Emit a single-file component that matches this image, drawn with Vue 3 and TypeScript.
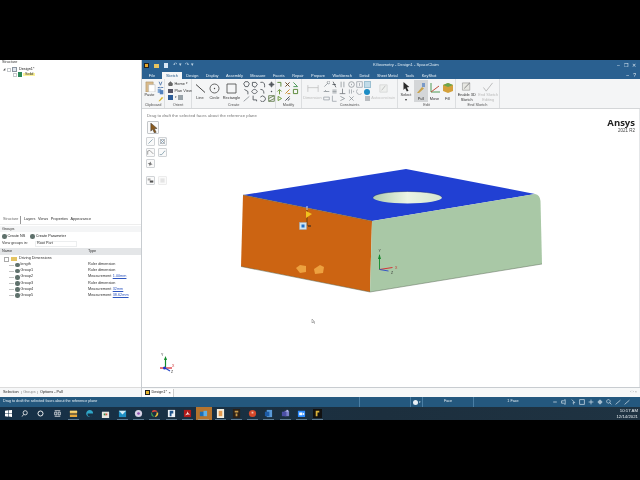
<script setup lang="ts">
interface Shape { d: string; c: string }
interface Row { name: string; type: string; link?: string }
interface Mini { d: string; c: string }

const fileTabs = ['Sketch', 'Design', 'Display', 'Assembly', 'Measure', 'Facets', 'Repair', 'Prepare', 'Workbench', 'Detail', 'Sheet Metal', 'Tools', 'KeyShot']

const rows: Row[] = [
  { name: 'length', type: 'Ruler dimension' },
  { name: 'Group1', type: 'Ruler dimension' },
  { name: 'Group2', type: 'Measurement', link: '1.00mm' },
  { name: 'Group3', type: 'Ruler dimension' },
  { name: 'Group4', type: 'Measurement', link: '32mm' },
  { name: 'Group5', type: 'Measurement', link: '38.62mm' }
]

const dark = '#4a4f55'
const createMinis: Mini[] = [
  { d: 'M3 1h4l2 3-2 4H3L1 4z', c: dark },
  { d: 'M2 2h5l2 3-3 4-4-2z', c: dark },
  { d: 'M2 2c4-1 6 1 6 4v3', c: dark },
  { d: 'M5 1v8M1 5h8M3 3h4v4H3z', c: dark },
  { d: 'M2 2l5 3v4', c: dark },
  { d: 'M1 5c2-4 6-4 8 0-2 4-6 4-8 0z', c: dark },
  { d: 'M2 2c4 0 5 2 5 6', c: dark },
  { d: 'M5 4v2M4 5h2', c: dark },
  { d: 'M1 9l8-7', c: '#8a9096' },
  { d: 'M3 1v6h5v2', c: dark },
  { d: 'M2 3a4 4 0 1 1 0 5', c: dark },
  { d: 'M1 1h8v8H1zM1 5l8-4M1 9l8-4', c: '#5e7a4a' }
]
const modifyMinis: Mini[] = [
  { d: 'M2 2h5v6', c: '#5c8a3a' },
  { d: 'M2 2l6 6M8 2L2 8', c: '#6b4a2a' },
  { d: 'M2 2l6 6M2 8h6', c: '#4e9a5a' },
  { d: 'M5 9V3M2 5l3-3 3 3', c: '#6c9a3c' },
  { d: 'M2 8l6-6M5 8h4', c: '#c98a2c' },
  { d: 'M2 2h6v6H2z', c: '#5c8a3a' },
  { d: 'M3 2v6l5-3z', c: '#6c9a3c' },
  { d: 'M2 8l6-6M6 8l2-3', c: '#4a4f55' }
]
const constraintMinis: Mini[] = [
  { d: 'M2 8l5-5M6 2a2 2 0 1 1 0 .1', c: '#8a9096' },
  { d: 'M3 1l4 8M2 5h5', c: dark },
  { d: 'M3 1v8M7 1v8', c: '#8a9096' },
  { d: 'M5 1a4 4 0 1 1 0 8 4 4 0 1 1 0-8M5 4v2', c: '#8a9096' },
  { d: 'M1 1h8v8H1zM5 3v4', c: '#9aa0a6' },
  { d: 'M1 5h8M3 3l2 2', c: '#8a9096' },
  { d: 'M2 3h6M2 5h6M2 7h6', c: '#8a9096' },
  { d: 'M5 1v7M1 8h8', c: '#6e7479' },
  { d: 'M2 2v6M5 2v6M8 4v2', c: '#9aa0a6' },
  { d: 'M2 2a4 4 0 0 0 6 6', c: '#9aa0a6' },
  { d: 'M1 3h8v4H1z', c: '#9aa0a6' },
  { d: 'M2 1v8h6', c: '#9aa0a6' },
  { d: 'M2 2l6 3-6 3', c: '#8a9096' },
  { d: 'M2 2l6 6M8 2L2 8', c: '#8a9096' }
]

const statusIcons = ['M2 5h6', 'M1 3h3l3-2v8L4 7H1z', 'M3 1l5 5H5l1 3', 'M1 1h8v8H1z', 'M5 1v8M1 5h8', 'M5 1v8M1 5h8M3 3h4v4H3z', 'M4 1a3 3 0 1 0 .1 0M6 6l3 3', 'M1 9l8-7', 'M1 9l8-7']

const taskIcons: Shape[][] = [
  [{ d: 'M1 2h8v3H1zM1 6h8v3H1z', c: '#e8a83a' }, { d: 'M1 2h8v2H1z', c: '#f6d77a' }],
  [{ d: 'M5 1a4 4 0 0 1 4 4H3a3 3 0 0 0 5 3 4 4 0 1 1-3-7z', c: '#2fa6c8' }],
  [{ d: 'M1 3h8v7H1z', c: '#e6e6e0' }, { d: 'M3 5h2v2H3z', c: '#2f8f4a' }, { d: 'M5 5h2v2H5z', c: '#d8553a' }],
  [{ d: 'M1 2h8v7H1z', c: '#1f8fc2' }, { d: 'M1 2l4 4 4-4z', c: '#d2ecf6' }],
  [{ d: 'M5 1a4 4 0 1 1 0 8 4 4 0 1 1 0-8z', c: '#d7d2e6' }, { d: 'M5 3.5a1.5 1.5 0 1 1 0 3 1.5 1.5 0 1 1 0-3z', c: '#8e4fb0' }],
  [{ d: 'M5 1a4 4 0 0 1 3.5 2H5a2 2 0 0 0-2 1L2 2.5A4 4 0 0 1 5 1z', c: '#d8453a' }, { d: 'M1.6 3.4L3 6l1.6 3A4 4 0 0 1 1.6 3.4z', c: '#3a9a52' }, { d: 'M9 4a4 4 0 0 1-4 5l2-3a2 2 0 0 0 0-2z', c: '#eec23a' }],
  [{ d: 'M1 1h8v8H1z', c: '#eef2f6' }, { d: 'M3 2h4v3H5v3H3z', c: '#20548c' }],
  [{ d: 'M1 1h8v8H1z', c: '#b01a1a' }, { d: 'M2 7c2-1 3-3 3-5 0 2 1 3 3 4-2 0-4 0-6 1z', c: '#f3e3e3' }],
  [{ d: 'M1 3h5v5H1z', c: '#1d6fb8' }, { d: 'M5 2h4v6H5z', c: '#5fb0e6' }],
  [{ d: 'M1 0h8v10H1z', c: '#f5efe0' }, { d: 'M3 2h4v6H3z', c: '#e59a4e' }],
  [{ d: 'M1 0h8v10H1z', c: '#2b2118' }, { d: 'M3 2h4v2H3zM4 5h2v3H4z', c: '#c79a4a' }],
  [{ d: 'M5 1a4 4 0 1 1 0 8 4 4 0 1 1 0-8z', c: '#d4482a' }, { d: 'M4 3h2v2H4z', c: '#f3c2b0' }],
  [{ d: 'M3 1h6v8H3z', c: '#5a9ad8' }, { d: 'M1 3h5v5H1z', c: '#1d5ba6' }],
  [{ d: 'M4 2h5v6H4z', c: '#7a80c8' }, { d: 'M1 3h5v5H1z', c: '#4b4fa6' }, { d: 'M6 1h2v2H6z', c: '#b4b8e8' }],
  [{ d: 'M1 2h8v6a1 1 0 0 1-1 1H2a1 1 0 0 1-1-1z', c: '#2d8cff' }, { d: 'M2.500 4h3.500v3H2.500zM6.500 5l1.500-1v3l-1.500-1z', c: '#ffffff' }],
  [{ d: 'M0 0h10v10H0z', c: '#111111' }, { d: 'M3 2h4v2H5v4H3z', c: '#d8b23a' }]
]
</script>

<template>
  <div class="screen">
    <div class="main">
      <aside class="left">
        <div class="caption">Structure</div>
        <div class="tree">
          <div class="tree-row">
            <span class="twist">◢</span><span class="check" /><span class="doc" />Design1*
          </div>
          <div class="tree-row sub">
            <span class="check" /><span class="solid-icon" /><span class="solid">Solid</span>
          </div>
        </div>
        <div class="tabs-row">
          <span class="active">Structure</span><span>Layers</span><span>Views</span><span>Properties</span><span>Appearance</span>
        </div>
        <div class="groups-head">Groups</div>
        <div class="create-row">
          <span class="create-item"><i class="gear" />Create NS</span>
          <span class="create-item"><i class="gear" />Create Parameter</span>
        </div>
        <div class="view-row">
          View groups in:
          <span class="combo">Root Part</span>
        </div>
        <div class="table-head"><span class="col-name">Name</span><span>Type</span></div>
        <div class="table-row folder-row">
          <span class="col-name"><i class="box" /><i class="folder" />Driving Dimensions</span>
        </div>
        <div v-for="r in rows" :key="r.name" class="table-row">
          <span class="col-name indent"><i class="line" /><i class="gear" />{{ r.name }}</span>
          <span>{{ r.type }}<a v-if="r.link" class="link">{{ r.link }}</a></span>
        </div>
        <div class="left-bottom">
          <span>Selection</span><span class="dim">Groups</span><span>Options - Pull</span>
        </div>
      </aside>

      <section class="right">
        <header class="title-bar">
          <div class="qat">
            <i class="q-logo" /><i class="q-open" /><i class="q-save" /><span class="q-undo">↶ ▾ ↷ ▾</span>
          </div>
          <span class="title-text">KGeometry - Design1 - SpaceClaim</span>
          <span class="win-btns">–&nbsp;&nbsp;&nbsp;❐&nbsp;&nbsp;&nbsp;✕</span>
        </header>
        <nav class="tab-bar">
          <span class="file">File</span>
          <span v-for="t in fileTabs" :key="t" class="tab" :class="{ on: t === 'Sketch' }">{{ t }}</span>
          <span class="tab-right">–&nbsp;&nbsp;&nbsp;?</span>
        </nav>

        <div class="ribbon">
          <div class="group g-clip">
            <div class="g-body">
              <div class="big paste"><svg width="12" height="11" viewBox="0 0 13 12"><path d="M2 1h8v11H2z" fill="#d8b98a" stroke="#a08a60" stroke-width=".5" /><path d="M5 4h7v8H5z" fill="#fff" stroke="#a9a9a9" stroke-width=".5" /></svg><span>Paste</span></div>
              <div class="minis-col">
                <svg width="7" height="7" viewBox="0 0 10 10"><path d="M3 1l2 5 2-5M3 9a1.500 1.500 0 1 0 .1 0M7 9a1.500 1.500 0 1 0 .1 0" fill="none" stroke="#5a7fb0" stroke-width="1.400" /></svg>
                <svg width="7" height="7" viewBox="0 0 10 10"><path d="M1 1h5v6H1z" fill="#7ea6d6" /><path d="M4 3h5v6H4z" fill="#4f7fbe" /></svg>
                <svg width="7" height="7" viewBox="0 0 10 10"><path d="M2 9l5-6 2 1-5 5z" fill="#d7b52e" /></svg>
              </div>
            </div>
            <div class="g-label">Clipboard</div>
          </div>

          <div class="group g-orient">
            <div class="orient">
              <div class="o-row"><i class="o-home" />Home<em>▾</em></div>
              <div class="o-row"><i class="o-plan" />Plan View</div>
              <div class="o-row"><i class="o-cube" /><em>▾</em><i class="o-cube gray" /></div>
            </div>
            <div class="g-label">Orient</div>
          </div>

          <div class="group g-create">
            <div class="g-body">
              <div class="big sk-line"><svg width="11" height="11" viewBox="0 0 11 11"><path d="M1 1.500l9 8" stroke="#333" stroke-width=".9" /></svg><span>Line</span></div>
              <div class="big sk-circle"><svg width="11" height="11" viewBox="0 0 11 11"><circle cx="5.500" cy="5.500" r="4.500" fill="none" stroke="#444" stroke-width=".8" /><circle cx="5.500" cy="5.500" r=".7" fill="#444" /></svg><span>Circle</span></div>
              <div class="big sk-rect"><svg width="11" height="11" viewBox="0 0 11 11"><path d="M1 1h9v9H1z" fill="none" stroke="#444" stroke-width=".8" /></svg><span>Rectangle</span></div>
              <div class="mini-grid c4">
                <svg v-for="(m, i) in createMinis" :key="i" width="7" height="7" viewBox="0 0 10 10"><path :d="m.d" fill="none" :stroke="m.c" stroke-width="1.200" /></svg>
              </div>
            </div>
            <div class="g-label">Create</div>
          </div>

          <div class="group g-modify">
            <div class="g-body">
              <div class="mini-grid c3">
                <svg v-for="(m, i) in modifyMinis" :key="i" width="7" height="7" viewBox="0 0 10 10"><path :d="m.d" fill="none" :stroke="m.c" stroke-width="1.400" /></svg>
              </div>
            </div>
            <div class="g-label">Modify</div>
          </div>

          <div class="group g-con">
            <div class="g-body">
              <div class="big off dim-big"><svg width="12" height="11" viewBox="0 0 14 12"><path d="M1 2v8M13 2v8M1 5h12" fill="none" stroke="#b9b9b9" stroke-width=".8" /></svg><span>Dimension</span></div>
              <div class="mini-grid c5">
                <svg v-for="(m, i) in constraintMinis" :key="i" width="7" height="7" viewBox="0 0 10 10"><path :d="m.d" fill="none" :stroke="m.c" stroke-width="1.100" /></svg>
              </div>
              <div class="teal-col">
                <i class="t-sel" /><i class="t-dot" /><i class="t-gray" />
              </div>
              <div class="big off auto"><svg width="11" height="11" viewBox="0 0 12 12"><path d="M2 2h8v8H2z" fill="#eef0ee" stroke="#c9c9c9" stroke-width=".6" /><path d="M4 8l4-5" stroke="#bdbdbd" /></svg><span>Autoconstrain</span></div>
            </div>
            <div class="g-label">Constraints</div>
          </div>

          <div class="group g-edit">
            <div class="g-body">
              <div class="big sel"><svg width="12" height="12" viewBox="0 0 12 12"><path d="M3 0l7 6-3 .500 2 4-2 1-2-4-2 2z" fill="#2b2b2b" /></svg><span>Select<br>▾</span></div>
              <div class="big pull"><svg width="12" height="12" viewBox="0 0 12 12"><path d="M2 11l5-6 2 1.500L4 11z" fill="#c9a24a" /><path d="M7 1h3v4H7z" fill="#7a9ac8" /></svg><span>Pull</span></div>
              <div class="big move"><svg width="12" height="12" viewBox="0 0 12 12"><path d="M2 1v9h9" fill="none" stroke="#4f9a54" stroke-width="1" /><path d="M2 10l8-6" stroke="#c0503c" stroke-width="1" /></svg><span>Move</span></div>
              <div class="big fill"><svg width="12" height="12" viewBox="0 0 12 12"><path d="M1 3l5-2 5 2v6l-5 2-5-2z" fill="#d4a03a" /><path d="M1 3l5 2 5-2-5-2z" fill="#6aa64e" /></svg><span>Fill</span></div>
            </div>
            <div class="g-label">Edit</div>
          </div>

          <div class="group g-end">
            <div class="g-body">
              <div class="big s3d"><svg width="12" height="11" viewBox="0 0 12 11"><path d="M1 1h8v8H1z" fill="#e7e7e2" stroke="#8a8a8a" stroke-width=".6" /><path d="M3 7l6-6" stroke="#555" stroke-width=".7" /></svg><span>Enable 3D<br>Sketch</span></div>
              <div class="big off end"><svg width="12" height="11" viewBox="0 0 12 11"><path d="M1 6l3 4 7-9" fill="none" stroke="#a8a8a8" stroke-width=".8" /></svg><span>End Sketch<br>Editing</span></div>
            </div>
            <div class="g-label">End Sketch</div>
          </div>
        </div>

        <div class="viewport">
          <div class="hint">Drag to draft the selected faces about the reference plane</div>
          <div class="brand"><b>Ansys</b><span>2021 R2</span></div>

          <div class="float-bar">
            <div class="tool big-tool"><svg width="9" height="10" viewBox="0 0 10 11"><path d="M2 0l7 6-3 .300 2 4-2 .700-2-4-2 2z" fill="#8a5a1e" stroke="#333" stroke-width=".5" /></svg></div>
            <div class="tool-row">
              <div class="tool"><svg viewBox="0 0 10 10"><path d="M2 8l6-6" stroke="#6f8f9f" /></svg></div>
              <div class="tool"><svg viewBox="0 0 10 10"><circle cx="5" cy="5" r="3" fill="none" stroke="#777" stroke-width=".8" /><path d="M1 1l8 8M9 1L1 9" stroke="#5a7f9f" stroke-width=".7" /></svg></div>
            </div>
            <div class="tool-row">
              <div class="tool"><svg viewBox="0 0 10 10"><path d="M1 8V3l3-1 5 5" fill="none" stroke="#7a7a7a" /></svg></div>
              <div class="tool"><svg viewBox="0 0 10 10"><path d="M1 8h3l4-5h1" fill="none" stroke="#6f8f9f" /></svg></div>
            </div>
            <div class="tool-row">
              <div class="tool"><svg viewBox="0 0 10 10"><path d="M5 2l1 3 2 1-3 1-1 2-1-3-2-1 3-1z" fill="#777" /></svg></div>
            </div>
            <div class="tool-row lower">
              <div class="tool"><svg viewBox="0 0 10 10"><path d="M1 2h4v3H1z" fill="#aaa" /><path d="M4 5h5v3H4z" fill="#555" /></svg></div>
              <div class="tool faint"><svg viewBox="0 0 10 10"><path d="M2 2h6v6H2z" fill="#e4e4e4" /></svg></div>
            </div>
          </div>

          <svg class="model" viewBox="143 109 497 278" width="497" height="278">
            <defs>
              <linearGradient id="hole" x1="0" y1="0" x2="1" y2="0">
                <stop offset="0" stop-color="#b0ccae" />
                <stop offset=".5" stop-color="#ecf5e4" />
                <stop offset="1" stop-color="#d6e7cf" />
              </linearGradient>
            </defs>
            <path d="M243 195L406 169 535 194 372 221Z" fill="#2140d3" />
            <path d="M243 195L372 221 370 292 241 266.500Z" fill="#cc6412" />
            <path d="M372 221L535 194Q540 195 540.500 201L542 264 370 292Z" fill="#a9c8a6" />
            <path d="M243 195L372 221M241 266.500L370 292 542 264" fill="none" stroke="#5d6a58" stroke-width=".5" />
            <ellipse cx="407.500" cy="197.500" rx="34.500" ry="6" fill="url(#hole)" />
            <path d="M373 197.500a34.500 6 0 0 1 69 0" fill="none" stroke="#16297a" stroke-width=".5" />

            <!-- pull handles -->
            <path d="M296 268l4-3 6 1v6l-6 1z" fill="#eda13f" />
            <path d="M314 269l6-4 4 2-1 6-8 1z" fill="#eda13f" />
            <path d="M307 208v18" stroke="#5b3a0e" stroke-width=".8" />
            <path d="M307 206v4" stroke="#fff" stroke-width=".8" />
            <path d="M306 211l6 3-6 4z" fill="#f2c21e" />
            <rect x="299.500" y="222.500" width="7" height="7" fill="#cfe3f2" stroke="#9ab" stroke-width=".4" />
            <rect x="301.500" y="224.500" width="3" height="3" fill="#1f70c8" />
            <path d="M308 226h3" stroke="#222" stroke-width="1" />

            <!-- face axes -->
            <path d="M379.500 269.500V255" stroke="#118a2a" stroke-width=".9" />
            <path d="M379.500 254l-1.500 5h3z" fill="#118a2a" />
            <path d="M379.500 269.500l13-2" stroke="#d8222a" stroke-width=".9" />
            <path d="M379.500 269.500l9 1.500" stroke="#2a4ac8" stroke-width=".9" />
            <text x="378.500" y="252" class="axis">Y</text>
            <text x="395" y="269" class="axis red">X</text>
            <text x="391" y="274" class="axis">Z</text>

            <!-- corner triad -->
            <path d="M165.500 367v-9" stroke="#118a2a" stroke-width="1.200" />
            <path d="M165.500 356l-1.500 4h3z" fill="#118a2a" />
            <path d="M160 368h12" stroke="#d8222a" stroke-width="1.200" />
            <path d="M165 368l5 3" stroke="#2a4ac8" stroke-width="1.200" />
            <circle cx="164.500" cy="368" r="1.500" fill="#1f34c8" />
            <text x="161" y="356" class="axis">Y</text>
            <text x="172" y="367" class="axis red">X</text>
            <text x="171" y="373" class="axis">Z</text>

            <!-- pointer -->
            <path d="M312 319l0 4 1-1 1.500 1.500 .5-.5-1.500-1.500h1z" fill="#fff" stroke="#555" stroke-width=".4" />
          </svg>
        </div>

        <div class="doc-bar">
          <span class="doc-tab"><i class="doc-logo" />Design1* <em>×</em></span>
          <span class="doc-ctrl">‹ › ×</span>
        </div>
      </section>
    </div>

    <footer class="status">
      <span class="status-msg">Drag to draft the selected faces about the reference plane</span>
      <span class="s-cell s-empty" />
      <span class="s-cell s-info"><i class="info" /><em>▾</em></span>
      <span class="s-cell s-face">Face</span>
      <span class="s-cell s-count">1 Face</span>
      <span class="s-icons">
        <svg v-for="(d, i) in statusIcons" :key="i" width="6" height="6" viewBox="0 0 10 10"><path :d="d" fill="none" stroke="#d4e2ec" stroke-width="1.200" /></svg>
      </span>
    </footer>

    <div class="taskbar">
      <span class="tb-sys">
        <svg width="7" height="7" viewBox="0 0 10 10"><path d="M0 1l4.500-.6v4.300H0zM5.300.3L10 0v4.700H5.300zM0 5.300h4.500v4.300L0 9zM5.300 5.300H10V10l-4.700-.6z" fill="#fff" /></svg>
      </span>
      <span class="tb-sys">
        <svg width="7" height="7" viewBox="0 0 10 10"><circle cx="6" cy="4" r="3" fill="none" stroke="#fff" stroke-width="1.100" /><path d="M4 6.500L1 9.500" stroke="#fff" stroke-width="1.100" /></svg>
      </span>
      <span class="tb-sys">
        <svg width="7" height="7" viewBox="0 0 10 10"><circle cx="5" cy="5" r="3.600" fill="none" stroke="#fff" stroke-width="1.300" /></svg>
      </span>
      <span class="tb-sys">
        <svg width="7" height="7" viewBox="0 0 10 10"><path d="M1 3h3v4H1zM6 3h3v4H6zM1 1h8M1 9h8" fill="none" stroke="#fff" stroke-width="1" /></svg>
      </span>
      <span
        v-for="(icon, i) in taskIcons"
        :key="i"
        class="tb-app"
        :class="{ hot: i === 8, open: i !== 1 && i !== 2 }"
      >
        <svg width="9" height="9" viewBox="0 0 10 10"><path v-for="(p, j) in icon" :key="j" :d="p.d" :fill="p.c" /></svg>
      </span>
      <span class="clock">10:17 AM<br>12/14/2021</span>
    </div>
  </div>
</template>

<style scoped>
.screen {
  width: 640px;
  height: 480px;
  background: #000;
  padding: 60px 0;
  box-sizing: border-box;
  font-family: "Liberation Sans", Arial, sans-serif;
  font-size: 4.200px;
  color: #333;
  overflow: hidden;
  display: flex;
  flex-direction: column;
  line-height: 1;
  filter: blur(.2px);
}
.screen i, .screen em { font-style: normal; display: inline-block; flex-shrink: 0; }
.main { display: flex; height: 337px; background: #fff; }

/* left side */
.left {
  width: 142px;
  flex-shrink: 0;
  box-sizing: border-box;
  border-right: 1px solid #c8ccd0;
  display: flex;
  flex-direction: column;
  background: #fff;
  font-size: 3.800px;
}
.caption { padding: 1px 0 0 2px; height: 7px; box-sizing: border-box; color: #333; }
.tree { height: 149px; box-sizing: border-box; }
.tree-row { display: flex; align-items: center; gap: 1px; height: 5px; color: #222; padding-left: 3px; }
.tree-row.sub { padding-left: 13px; }
.twist { font-size: 3px; color: #555; margin-right: 1px; }
.check { width: 4px; height: 4px; box-sizing: border-box; border: 1px solid #c4c8cc; }
.doc { width: 5px; height: 5px; box-sizing: border-box; background: #dfe6ee; border: 1px solid #8a94a0; margin-right: 1px; }
.solid-icon { width: 4px; height: 5px; background: #2d8a5a; }
.solid { background: #fbf29a; padding: 0 2px; color: #333; }
.tabs-row { display: flex; gap: 2.600px; height: 8px; align-items: center; padding-left: 3px; color: #333; border-bottom: 1px solid #eee; }
.tabs-row .active { border-right: 1px solid #999; padding-right: 2px; color: #666; height: 100%; display: flex; align-items: center; }
.groups-head { height: 6px; background: #f4f5f6; padding: 1.500px 0 0 2px; box-sizing: border-box; margin-top: 1px; color: #333; }
.create-row { display: flex; gap: 5px; height: 7px; align-items: center; padding-left: 2px; color: #222; margin-top: 1px; }
.create-item { display: flex; align-items: center; gap: 1px; }
.view-row { display: flex; align-items: center; height: 7px; padding-left: 2px; gap: 6px; color: #333; white-space: nowrap; }
.combo { width: 42px; height: 6px; box-sizing: border-box; border: 1px solid #eceeef; padding-left: 1px; display: flex; align-items: center; margin-left: 1px; }
.table-head { display: flex; height: 7px; align-items: center; background: #e4e6e8; margin-top: 1px; color: #333; }
.col-name { width: 88px; padding-left: 2px; box-sizing: border-box; display: flex; align-items: center; gap: 1px; flex-shrink: 0; }
.table-row { display: flex; height: 6.100px; align-items: center; color: #333; }
.folder-row { margin-top: 1px; }
.folder-row .col-name { padding-left: 4px; }
.indent { padding-left: 9px; }
.box { width: 3px; height: 3px; border: 1px solid #aaa; margin-right: 1px; }
.folder { width: 6px; height: 4px; background: #e4c463; margin-right: 1px; }
.line { width: 5px; height: 1px; background: #c4c4c4; }
.gear { width: 4.500px; height: 4.500px; border-radius: 50%; background: #5f716c; }
.link { color: #2f57c0; text-decoration: underline; margin-left: 1.500px; }
.left-bottom { margin-top: auto; height: 10px; box-sizing: border-box; display: flex; gap: 2.500px; align-items: center; padding-left: 3px; border-top: 1px solid #dcdcdc; color: #222; background: #f6f7f8; }
.left-bottom .dim { color: #888; border-left: 1px solid #ccc; border-right: 1px solid #ccc; padding: 0 1px; }

/* right side */
.right { flex: 1; min-width: 0; display: flex; flex-direction: column; }
.title-bar {
  height: 11px;
  background: #2a6090;
  color: #e0ecf4;
  display: flex;
  align-items: center;
  position: relative;
  padding: 0 2px;
}
.qat { display: flex; align-items: center; gap: 5px; }
.q-logo { width: 5px; height: 5px; background: #e5a82c; border: 1px solid #222; box-sizing: border-box; }
.q-open { width: 5px; height: 4px; background: #e8c460; }
.q-save { width: 4px; height: 4.500px; background: #d8e6f4; }
.q-undo { color: #bcd2e4; font-size: 4.500px; word-spacing: 1px; }
.title-text { position: absolute; left: 231px; font-size: 4.150px; }
.win-btns { margin-left: auto; margin-right: 2px; font-size: 5px; color: #d8e6f0; }
.tab-bar {
  height: 8px;
  background: #2a6090;
  color: #eaf2f7;
  display: flex;
  align-items: flex-end;
  font-size: 3.900px;
}
.file { width: 20px; text-align: center; padding-bottom: 1.500px; }
.tab { padding: 0 3.200px 1.500px; margin-right: 1.100px; }
.tab.on { background: #f5f6f7; color: #1f5585; padding: 1.500px 4px 1.500px; }
.tab-right { margin-left: auto; padding: 0 4px 1.500px 0; font-size: 5px; }

.ribbon {
  height: 29px;
  background: #f4f5f6;
  border-bottom: 1px solid #d4d6d8;
  display: flex;
  font-size: 3.900px;
}
.group {
  display: flex;
  flex-direction: column;
  border-right: 1px solid #dcdee0;
  box-sizing: border-box;
  flex-shrink: 0;
}
.g-clip { width: 23px; }
.g-orient { width: 27px; }
.g-create { width: 84px; }
.g-modify { width: 26px; }
.g-con { width: 96px; }
.g-edit { width: 58px; }
.g-end { width: 44px; }
.g-body { flex: 1; display: flex; align-items: flex-start; padding-top: 1px; min-height: 0; }
.g-label { height: 6px; line-height: 6px; text-align: center; color: #555; font-size: 3.900px; }
.big { display: flex; flex-direction: column; align-items: center; box-sizing: border-box; height: 22px; text-align: center; color: #333; white-space: nowrap; }
.big span { display: block; line-height: 1.150; }
.big.off { color: #bbb; }
.paste { width: 15px; padding-top: 1px; gap: 1px; }
.minis-col { display: flex; flex-direction: column; padding-top: 1px; }
.orient { flex: 1; padding: 2px 0 0 3px; display: flex; flex-direction: column; gap: 1.500px; }
.o-row { display: flex; align-items: center; gap: 1.500px; height: 5.500px; color: #333; white-space: nowrap; }
.o-row em { font-size: 3px; }
.o-home { width: 5px; height: 5px; background: #666; clip-path: polygon(50% 0, 100% 50%, 85% 100%, 15% 100%, 0 50%); }
.o-plan { width: 5px; height: 4.500px; background: #556; }
.o-cube { width: 5px; height: 5px; background: #2c5c98; }
.o-cube.gray { background: #98a2a8; }
.sk-line, .sk-circle, .sk-rect, .dim-big, .auto { padding-top: 3px; gap: 1.500px; }
.sk-line { width: 16px; }
.sk-circle { width: 13px; }
.sk-rect { width: 21px; }
.mini-grid { display: grid; gap: 0 1.200px; padding-top: 1px; }
.c3 { grid-template-columns: repeat(3, 7px); }
.c4 { grid-template-columns: repeat(4, 7px); margin-left: 1px; }
.c5 { grid-template-columns: repeat(5, 7px); }
.dim-big { width: 21px; }
.teal-col { display: flex; flex-direction: column; margin-left: 1px; padding-top: 1px; }
.t-sel { width: 7px; height: 7px; background: #c2dbe8; box-sizing: border-box; border: 1px solid #9cc0d2; }
.t-dot { width: 6px; height: 6px; margin: .5px; border-radius: 50%; background: #1c8cc4; }
.t-gray { width: 5px; height: 5px; margin: 1px; background: #b8bcc0; }
.big.auto { width: 25px; color: #c4c4c4; }
.big.sel { width: 16px; padding-top: 2px; gap: 1px; }
.big.pull { width: 14px; padding-top: 2px; gap: 2.500px; background: #d4d6d8; }
.big.move { width: 13px; padding-top: 2px; gap: 2.500px; }
.big.fill { width: 13px; padding-top: 2px; gap: 2.500px; }
.big.s3d { width: 22px; padding-top: 2px; gap: 1px; }
.big.end { width: 22px; padding-top: 2px; gap: 1px; }

.viewport { flex: 1; position: relative; min-height: 0; overflow: hidden; background: #fff; border-right: 1px solid #e4e6e8; }
.hint { position: absolute; left: 5px; top: 5px; color: #777; font-size: 4.300px; }
.brand { position: absolute; right: 4px; top: 9px; display: flex; flex-direction: column; align-items: flex-end; color: #222; gap: 1.500px; }
.brand b { font-size: 9.500px; font-family: "Open Sans", "Liberation Sans", sans-serif; }
.brand span { font-size: 4.500px; color: #444; }
.float-bar { position: absolute; left: 4px; top: 12px; display: flex; flex-direction: column; gap: 2px; z-index: 1; }
.tool { width: 9px; height: 9px; box-sizing: border-box; border: 1px solid #d0d3d6; border-radius: 1px; background: #fafafa; display: flex; align-items: center; justify-content: center; }
.tool svg { width: 7px; height: 7px; flex-shrink: 0; }
.big-tool { width: 12px; height: 13px; margin: 0 0 1px 1px; border-color: #c4c7ca; }
.big-tool svg { width: 9px; height: 10px; }
.tool-row { display: flex; gap: 3px; }
.tool-row.lower { margin-top: 6px; }
.tool.faint { border-color: #ececec; }
.model { position: absolute; left: 1px; top: 0; }
.axis { font: 3.500px "Liberation Sans", sans-serif; fill: #333; }
.axis.red { fill: #c83030; }

.doc-bar { height: 10px; border-top: 1px solid #c8ccd0; background: #f7f8f8; display: flex; align-items: center; box-sizing: border-box; font-size: 3.800px; }
.doc-tab { display: flex; align-items: center; gap: 1.500px; height: 8px; background: #fff; border-right: 1px solid #ccc; padding: 0 2px 0 3px; color: #222; }
.doc-tab em { font-size: 4px; }
.doc-logo { width: 5px; height: 5px; background: #e5b52c; box-sizing: border-box; border: 1px solid #222; }
.doc-ctrl { margin-left: auto; margin-right: 3px; color: #999; }

.status {
  height: 10px;
  flex-shrink: 0;
  background: #24587e;
  color: #e6eff5;
  display: flex;
  align-items: center;
  padding-left: 3px;
  font-size: 3.700px;
}
.status-msg { width: 356px; flex-shrink: 0; }
.s-cell { height: 100%; display: flex; align-items: center; justify-content: center; border-left: 1px solid #4a7ea4; box-sizing: border-box; flex-shrink: 0; }
.s-empty { width: 51px; }
.s-info { width: 12px; gap: 1px; }
.s-info em { font-size: 3px; }
.info { width: 5px; height: 5px; border-radius: 50%; background: #e8f0f6; }
.s-face { width: 51px; }
.s-count { width: 79px; }
.s-icons { display: flex; gap: 3px; }

.taskbar {
  height: 13px;
  flex-shrink: 0;
  background: linear-gradient(90deg, #163148, #1c2f3e 60%, #1f3342);
  display: flex;
  align-items: center;
  color: #e8eef2;
}
.tb-sys { width: 16.300px; height: 100%; display: flex; align-items: center; justify-content: center; flex-shrink: 0; }
.tb-app { width: 16.300px; height: 100%; display: flex; align-items: center; justify-content: center; flex-shrink: 0; }
.tb-app.open {
  background: linear-gradient(rgba(150, 185, 210, .55), rgba(150, 185, 210, .55)) center bottom / 11px 1px no-repeat;
}
.tb-app.hot { background-color: #b5742e; }
.clock { margin-left: auto; margin-right: 2px; text-align: right; font-size: 4.300px; line-height: 1.250; }
</style>

<style>
html, body { background: #000; }
</style>
